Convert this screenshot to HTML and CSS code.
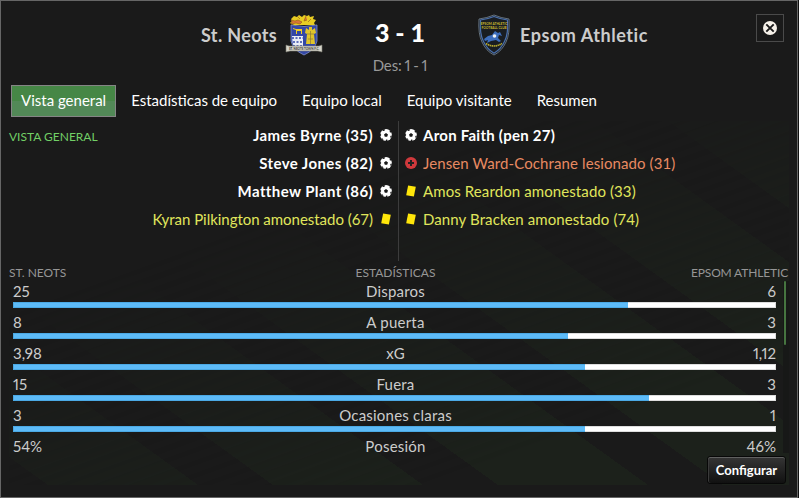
FILE: index.html
```html
<!DOCTYPE html>
<html lang="es">
<head>
    <meta charset="UTF-8">
    <meta name="viewport" content="width=device-width, initial-scale=1.0">
    <title>St. Neots 3 - 1 Epsom Athletic</title>
    <link rel="stylesheet" href="styles.css">
</head>
<body>

    <svg class="sprites" width="0" height="0">
        <symbol id="ball" viewBox="0 0 12 12">
            <circle cx="6" cy="6" r="5.9" fill="#fff"/>
            <path d="M6 4l2 1.500-.8 2.300H4.800L4 5.500zM3.600 0l1.700.7L4 2 2.300 1.800zM11 1.600l.3 2.200-1.500-.6-.2-1.500zM12 7l-1.300 2-.5-1.500.8-1.100zM7.200 12l-1.700-.1.700-1.300 1.400.2zM2.800 11.200L1.200 9.400l1.600.1.600 1.200zM0 6.400l.2-2.200 1 1.600-.4 1.400z" fill="#1a1a1a"/>
        </symbol>
        <symbol id="injury" viewBox="0 0 12 12">
            <circle cx="6" cy="6" r="6" fill="#d0393c"/>
            <path d="M5 3h2v2h2v2H7v2H5V7H3V5h2z" fill="#222"/>
        </symbol>
        <symbol id="card" viewBox="0 0 12 12">
            <path d="M3.100.6l7.700 1.200-1.900 9.700-7.700-1.300z" fill="#ffe60a"/>
        </symbol>
    </svg>

    <div class="match">
        <header class="header">
            <div class="team home">
                <h2>St. Neots</h2>
                <svg class="crest crest-home" width="38" height="42" viewBox="0 0 38 42">
                    <path d="M6 5l3-3 3 1 2-2 3 2 2-2 3 1 2-1 1 2 4-1-1 3 3 1-2 3 1 2H9l-4-2 2-2z" fill="#e8cc22"/>
                    <path d="M6 6l4 1 3-1 4 2-2 2-4-1-5 1 1-2zM12 2l3 3M21 2l-2 5 3-1M26 5l-3 3" fill="#d77439" stroke="#9b6517" stroke-width=".7"/>
                    <path d="M6 11q13 3 26 0v16q-2 9-13 14Q8 36 6 27z" fill="#3347a6" stroke="#8290cc" stroke-width=".8"/>
                    <path d="M7 22h11v12H9Q7 28 7 22z" fill="#e9edf6"/>
                    <path d="M7 24h11M8 28h10M8 32h10" stroke="#3347a6" stroke-width="1.500" stroke-dasharray="2 1.500"/>
                    <path d="M8 14l3 1h6v5h-1v-3h-4v3h-1v-4l-3-1z" fill="#efd022"/>
                    <path d="M24 13h3v3l3-2 1 5-2 1 1 10h-9l1-10-2-1 1-5 3 2z" fill="#dfc42b"/>
                    <path d="M25.500 17v13M22 20h7M23 25h5" stroke="#8b7938" stroke-width=".7"/>
                    <path d="M1 31l3 1h30l3-1v7l-4-1H5l-4 1z" fill="#d6d5ca" stroke="#79796f" stroke-width=".6"/>
                    <text x="19" y="36" text-anchor="middle" class="crest-motto">ST. NEOTS TOWN F.C.</text>
                </svg>
            </div>
            <div class="score">
                <strong>3 - 1</strong>
                <span>Des: 1 - 1</span>
            </div>
            <div class="team away">
                <svg class="crest crest-away" width="34" height="42" viewBox="0 0 34 42">
                    <path d="M2 5Q10 4 17 1q7 3 15 4 1 15-3 23-4 9-12 13Q9 37 5 28 1 20 2 5z" fill="#191d22" stroke="#8496a8" stroke-width=".7"/>
                    <path d="M3.500 6Q11 5 17 2.500 23 5 30.500 6q1 14-3 21.500Q24 35 17 39.300 10 35 6.500 27.500 2.500 20 3.500 6z" fill="none" stroke="#4a70ad" stroke-width="1.200"/>
                    <text x="17" y="11" text-anchor="middle" class="crest-name">EPSOM ATHLETIC</text>
                    <text x="17" y="15" text-anchor="middle" class="crest-name">FOOTBALL CLUB</text>
                    <path d="M7 25l4-3 4-1 3-4 3 2 2-1 2 4-3-1-1 3 3 3-2 1-3-2-5 1-4 2 1-3-3 1z" fill="#3d6ebd"/>
                    <circle cx="17.500" cy="22" r="1.800" fill="#eef2f4"/>
                    <path d="M9 29.500q8 5 16 0" fill="none" stroke="#b5a82f" stroke-width="1.700" stroke-dasharray="1.500 .5"/>
                </svg>
                <h2>Epsom Athletic</h2>
                <button class="close" aria-label="Cerrar">
                    <svg width="14" height="14" viewBox="0 0 14 14">
                        <circle cx="7" cy="7" r="7" fill="#f7f2ea"/>
                        <path d="M3.300 3.300l7.400 7.400M10.700 3.300l-7.400 7.400" stroke="#1a1a1a" stroke-width="1.900"/>
                    </svg>
                </button>
            </div>
        </header>

        <nav class="tabs">
            <a class="tab active">Vista general</a>
            <a class="tab">Estadísticas de equipo</a>
            <a class="tab">Equipo local</a>
            <a class="tab">Equipo visitante</a>
            <a class="tab">Resumen</a>
        </nav>

        <main class="content">
            <section class="events">
                <h3>VISTA GENERAL</h3>
                <ul class="list list-home">
                    <li class="goal">James Byrne (35)<svg><use href="#ball"/></svg></li>
                    <li class="goal">Steve Jones (82)<svg><use href="#ball"/></svg></li>
                    <li class="goal">Matthew Plant (86)<svg><use href="#ball"/></svg></li>
                    <li class="booked">Kyran Pilkington amonestado (67)<svg><use href="#card"/></svg></li>
                </ul>
                <ul class="list list-away">
                    <li class="goal"><svg><use href="#ball"/></svg>Aron Faith (pen 27)</li>
                    <li class="injured"><svg><use href="#injury"/></svg>Jensen Ward-Cochrane lesionado (31)</li>
                    <li class="booked"><svg><use href="#card"/></svg>Amos Reardon amonestado (33)</li>
                    <li class="booked"><svg><use href="#card"/></svg>Danny Bracken amonestado (74)</li>
                </ul>
            </section>

            <div class="stats-head">
                <span>ST. NEOTS</span>
                <span>ESTADÍSTICAS</span>
                <span>EPSOM ATHLETIC</span>
            </div>

            <section class="stats">
                <div class="rows">
                    <div class="row">
                        <span>25</span><span>Disparos</span><span>6</span>
                        <div class="bar"><div class="fill" style="width: 80.7%"></div></div>
                    </div>
                    <div class="row">
                        <span>8</span><span>A puerta</span><span>3</span>
                        <div class="bar"><div class="fill" style="width: 72.8%"></div></div>
                    </div>
                    <div class="row">
                        <span>3,98</span><span>xG</span><span>1,12</span>
                        <div class="bar"><div class="fill" style="width: 75.1%"></div></div>
                    </div>
                    <div class="row">
                        <span>15</span><span>Fuera</span><span>3</span>
                        <div class="bar"><div class="fill" style="width: 83.5%"></div></div>
                    </div>
                    <div class="row">
                        <span>3</span><span>Ocasiones claras</span><span>1</span>
                        <div class="bar"><div class="fill" style="width: 75.1%"></div></div>
                    </div>
                    <div class="row">
                        <span>54%</span><span>Posesión</span><span>46%</span>
                    </div>
                </div>
                <div class="scroll"><div class="thumb"></div></div>
            </section>

            <button class="configure">Configurar</button>
        </main>
    </div>

</body>
</html>
```
FILE: styles.css
```css
* {
    box-sizing: border-box;
}

body {
    margin: 0;
    background-color: #101010;
    color: #ffffff;
    font-family: 'Lato', sans-serif;
    font-size: 15px;
    overflow: hidden;
}

h2, h3, ul {
    margin: 0;
    padding: 0;
    list-style: none;
}

.sprites {
    position: absolute;
}

.match {
    width: 798px;
    height: 498px;
    border: 1px solid #666666;
    background-color: #1a1a1a;
}

.header {
    display: grid;
    grid-template-columns: 322px 154px 1fr;
    height: 84px;
}

.team {
    display: flex;
    padding-top: 13px;
}

.team h2 {
    font-size: 18px;
    line-height: 42px;
    color: #cccccc;
    letter-spacing: 0.55px;
}

.home {
    justify-content: flex-end;
    gap: 8px;
}

.home h2 {
    letter-spacing: 0.35px;
}

.away h2 {
    margin-left: 9px;
}

.crest-motto {
    font-size: 3px;
    font-weight: bold;
    fill: #333333;
}

.crest-name {
    font-size: 3.2px;
    font-weight: bold;
    fill: #c9bb2e;
}

.score {
    display: flex;
    flex-direction: column;
    align-items: center;
    padding-top: 15px;
}

.score strong {
    font-size: 25px;
    line-height: 32px;
    font-weight: 900;
}

.score span {
    margin-top: 7px;
    line-height: 20px;
    color: #999999;
    font-variant-numeric: proportional-nums;
    letter-spacing: -0.15px;
    word-spacing: -0.8px;
}

.close {
    display: flex;
    align-items: center;
    justify-content: center;
    width: 28px;
    height: 28px;
    margin: 0 13px 0 auto;
    padding: 0;
    background: none;
    border: 1px solid #4a4a4a;
}

.tabs {
    display: flex;
    gap: 5px;
    height: 36px;
    padding-left: 10px;
}

.tab {
    height: 32px;
    padding: 0 10px;
    line-height: 31px;
    white-space: nowrap;
}

.tab.active {
    padding: 0 9px;
    line-height: 29px;
    border: 1px solid #858585;
    background: linear-gradient(#468746 50%, #528957 50%);
}

.content {
    position: relative;
    height: 364px;
    margin: 0 8px;
}

/* franjas diagonales del fondo */
.content::before {
    content: '';
    position: absolute;
    inset: 0;
    background: repeating-linear-gradient(35.8deg, #1a1a1a 0 22.8px, #1c211b 22.8px 110.6px, #1a1a1a 110.6px 131.6px);
    -webkit-mask-image: linear-gradient(160deg, transparent 30%, #000 80%);
    mask-image: linear-gradient(160deg, transparent 30%, #000 80%);
}

.events,
.stats-head,
.stats {
    position: relative;
}

.events {
    display: grid;
    grid-template-columns: 120px 269px 1fr;
    height: 140px;
}

.events h3 {
    font-size: 12px;
    font-weight: normal;
    line-height: 32px;
    color: #72cf66;
}

.list li {
    display: flex;
    align-items: center;
    gap: 6px;
    height: 28px;
    padding-bottom: 1px;
    white-space: nowrap;
}

.list svg {
    width: 12px;
    height: 12px;
    margin-top: 1px;
}

.list-home li {
    justify-content: flex-end;
    gap: 7px;
    padding-right: 6px;
}

.list-away {
    padding-left: 6px;
    border-left: 1px solid #3c3c3c;
}

.list .goal {
    font-weight: bold;
    letter-spacing: 0.4px;
}

.list-away .goal {
    letter-spacing: 0.25px;
}

.booked {
    color: #e0e65c;
}

.list-home .booked {
    letter-spacing: -0.03px;
}

.injured {
    color: #e88a62;
}

.list-away .booked,
.list-away .injured {
    letter-spacing: 0.1px;
}

.stats-head {
    display: grid;
    grid-template-columns: 1fr 1fr 1fr;
    height: 20px;
    padding-top: 4px;
    font-size: 12px;
    line-height: 16px;
    color: #969696;
}

.stats-head span:nth-child(2) {
    margin-left: -7px;
    text-align: center;
}

.stats-head span:nth-child(3) {
    padding-right: 1px;
    text-align: right;
    letter-spacing: -0.15px;
}

.stats {
    display: flex;
    height: 172px;
}

.rows {
    flex: 1;
    padding: 0 7px 0 4px;
}

.row {
    display: grid;
    grid-template-columns: 1fr 1fr 1fr;
    grid-template-rows: 21px 6px;
    height: 31px;
    line-height: 20px;
    color: #cccccc;
    font-variant-numeric: proportional-nums;
}

.row span {
    margin-top: -0.4px;
}

.row span:nth-child(2) {
    padding-left: 2px;
    text-align: center;
    letter-spacing: 0.22px;
}

.row span:nth-child(3) {
    text-align: right;
}

.bar {
    grid-column: 1 / -1;
    background-color: #ffffff;
    border: 1px solid #dddddd;
    border-left: none;
}

.fill {
    height: 6px;
    margin-top: -1px;
    background-color: #5dbbf8;
    border: 1px solid #4ba9e4;
    border-right: none;
}

.scroll {
    width: 6px;
    background-color: #171817;
}

.thumb {
    width: 2px;
    height: 64px;
    margin-left: 1px;
    border-radius: 1px;
    background-color: #467540;
}

.configure {
    position: relative;
    display: block;
    width: 79px;
    height: 28px;
    margin: 3px 3px 0 auto;
    padding: 0 0 1px;
    border: 1px solid #080808;
    border-radius: 3px;
    background: linear-gradient(#353535, #111111);
    box-shadow: inset 0 1px #606060, inset 1px 0 #3a3a3a;
    color: #ffffff;
    font-family: inherit;
    font-size: 13px;
    font-weight: bold;
}
```
